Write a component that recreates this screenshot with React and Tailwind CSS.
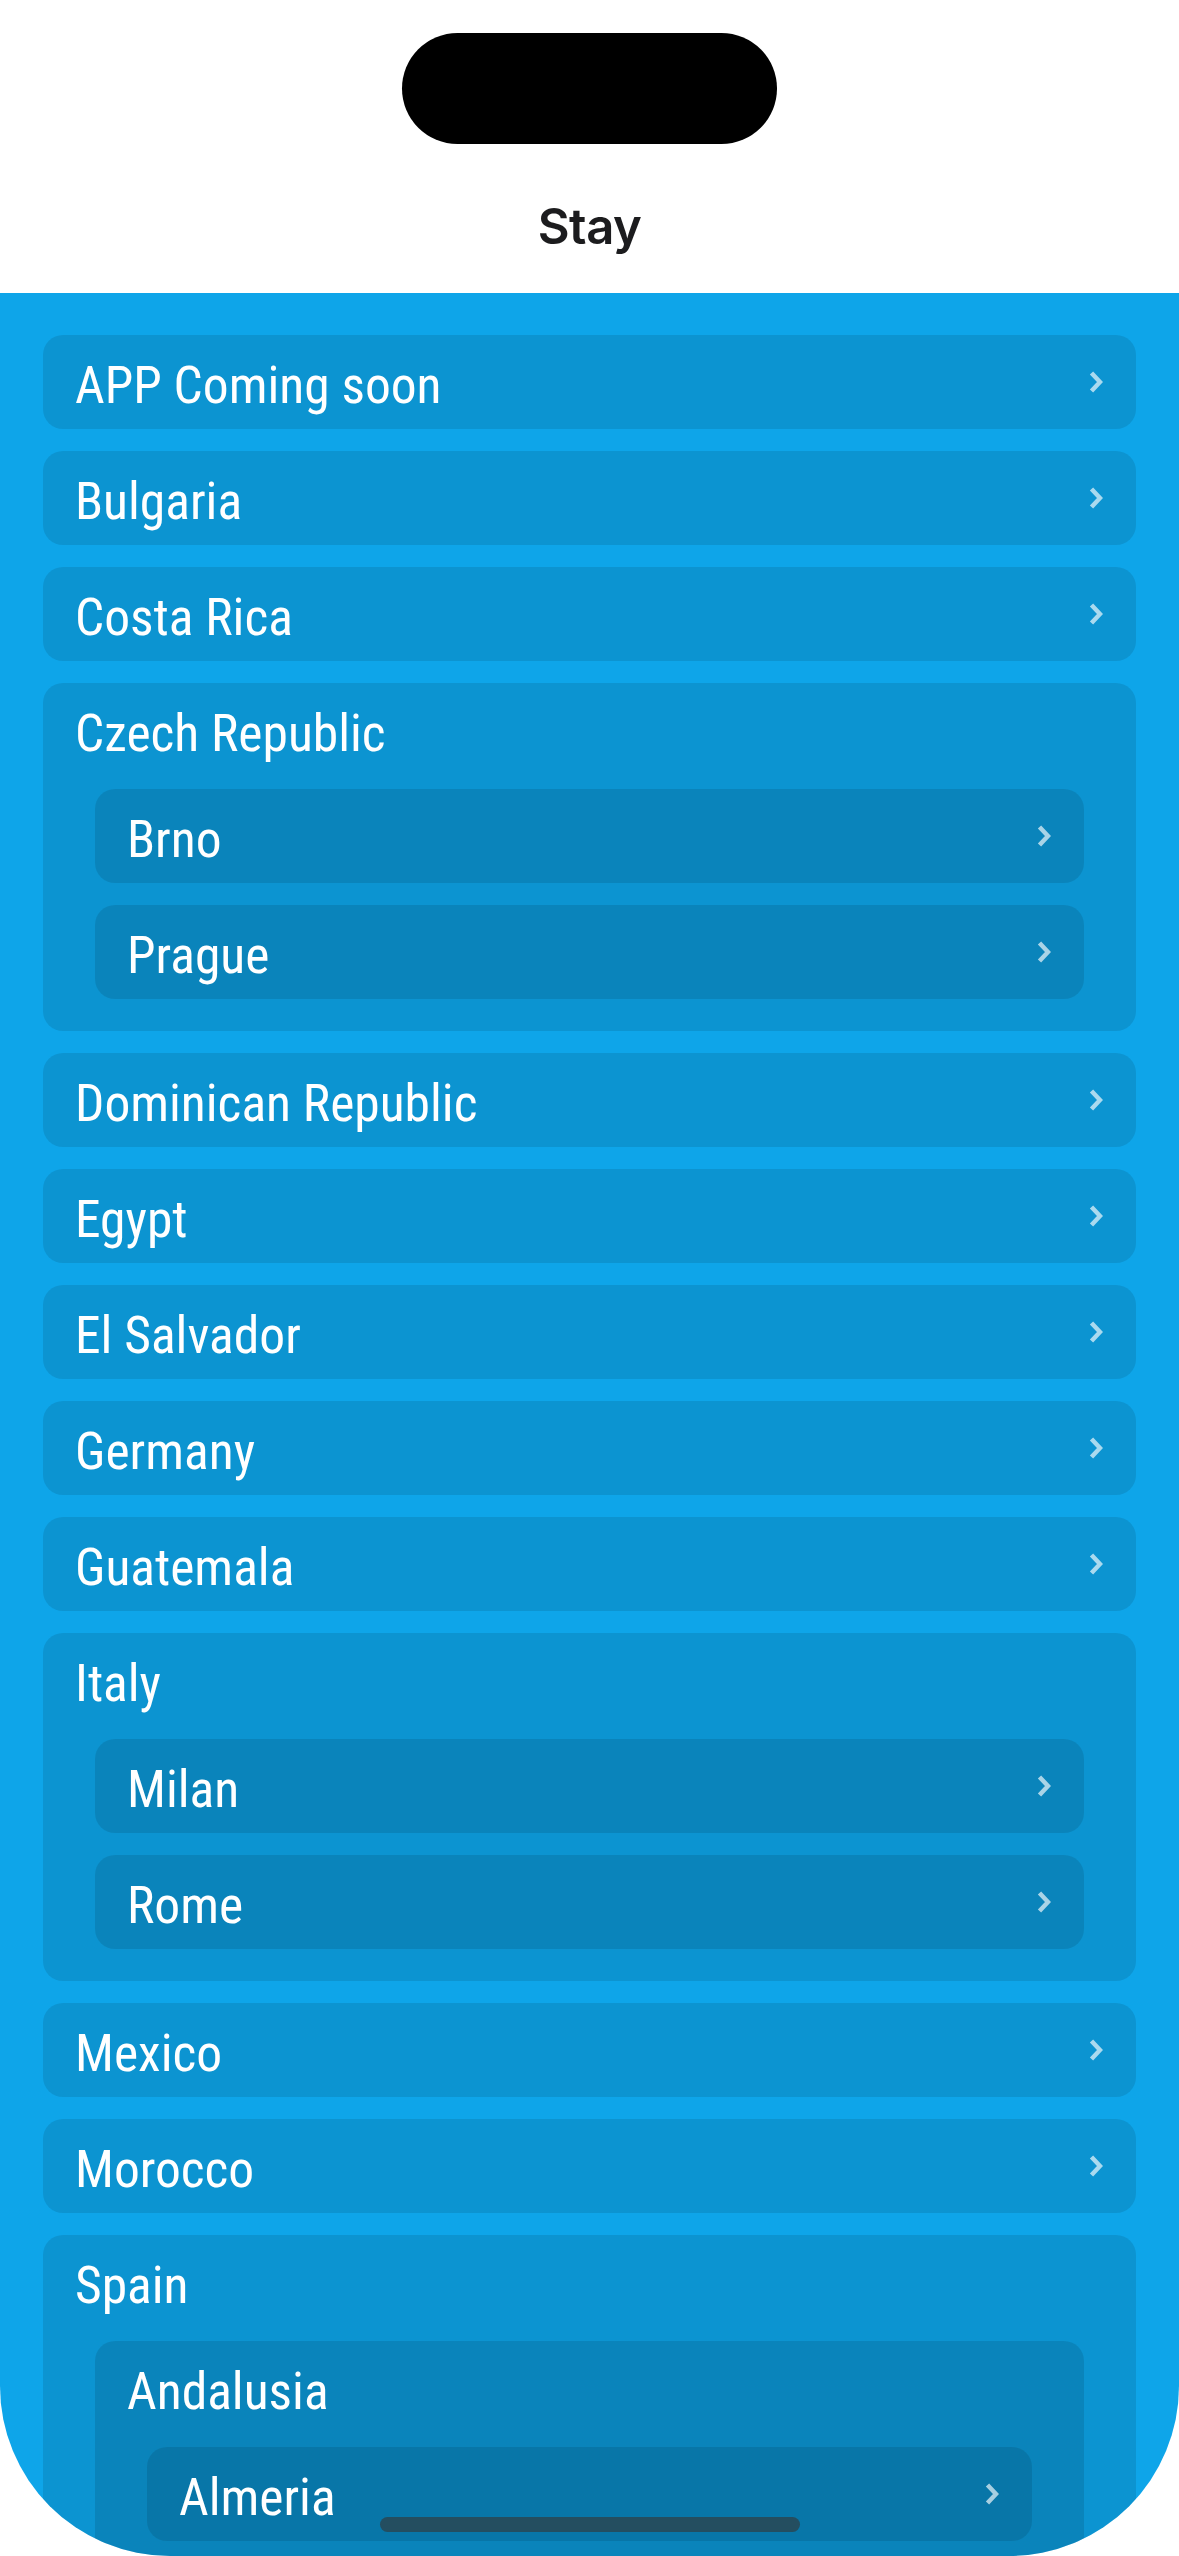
const places = [
  { name: "APP Coming soon" },
  { name: "Bulgaria" },
  { name: "Costa Rica" },
  { name: "Czech Republic", children: [{ name: "Brno" }, { name: "Prague" }] },
  { name: "Dominican Republic" },
  { name: "Egypt" },
  { name: "El Salvador" },
  { name: "Germany" },
  { name: "Guatemala" },
  { name: "Italy", children: [{ name: "Milan" }, { name: "Rome" }] },
  { name: "Mexico" },
  { name: "Morocco" },
  { name: "Spain", children: [{ name: "Andalusia", children: [{ name: "Almeria" }] }] },
];

function Chevron() {
  return (
    <svg width="14" height="22" viewBox="0 0 14 22" className="shrink-0">
      <path d="M2.5 2 L11 11 L2.5 20" fill="none" stroke="white" strokeOpacity="0.65" strokeWidth="4.5" />
    </svg>
  );
}

function Label({ children }) {
  return (
    <span className="pt-[8px] text-[51.5px] leading-none text-white font-['Roboto_Condensed',Roboto,sans-serif] font-stretch-condensed">
      {children}
    </span>
  );
}

// a place is either a tappable row or a group holding more places
function Place({ place }) {
  if (!place.children) {
    return (
      <div className="h-[94px] rounded-[20px] bg-black/10 flex items-center justify-between pl-[32px] pr-[33px]">
        <Label>{place.name}</Label>
        <Chevron />
      </div>
    );
  }
  return (
    <div className="rounded-[20px] bg-black/10 pb-[32px]">
      <div className="h-[94px] flex items-center pl-[32px]">
        <Label>{place.name}</Label>
      </div>
      <div className="mt-[12px] px-[52px] flex flex-col gap-[22px]">
        {place.children.map((c) => (
          <Place key={c.name} place={c} />
        ))}
      </div>
    </div>
  );
}

export default function App() {
  return (
    <main className="bg-white">
      <div className="relative h-[2556px] overflow-hidden rounded-b-[170px] bg-[#0ea5e9] flex flex-col">
        {/* Header */}
        <header className="h-[293px] shrink-0 bg-white flex flex-col items-center">
          <div className="mt-[33px] w-[375px] h-[111px] rounded-full bg-black" />
          <h1 className="mt-[53px] h-[60px] leading-[60px] text-[49px] font-semibold tracking-[-0.5px] text-[#1c1c1e] font-['Inter',sans-serif]">
            Stay
          </h1>
        </header>

        {/* List */}
        <div className="px-[43px] pt-[42px] flex flex-col gap-[22px]">
          {places.map((p) => (
            <Place key={p.name} place={p} />
          ))}
        </div>

        {/* Home indicator */}
        <div className="absolute bottom-[24px] left-1/2 -translate-x-1/2 w-[420px] h-[15px] rounded-full bg-[#244e60]" />
      </div>
    </main>
  );
}
